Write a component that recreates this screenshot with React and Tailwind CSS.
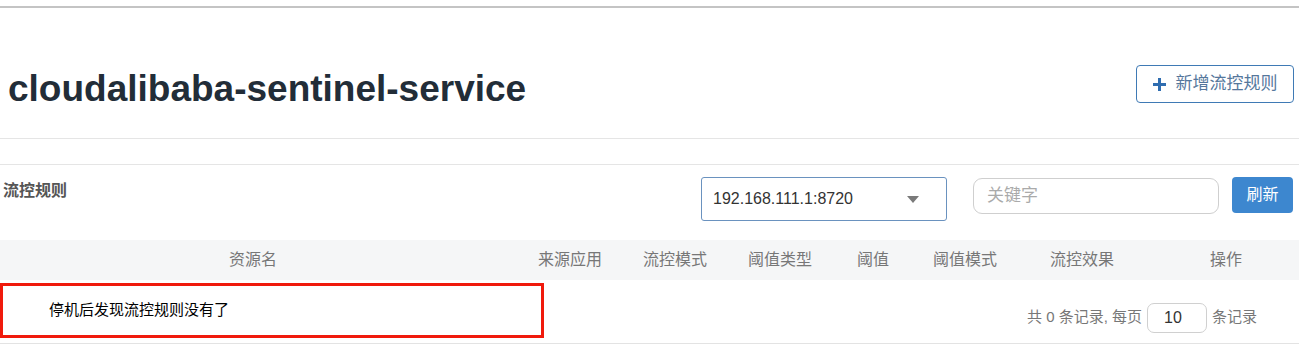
import React from 'react';

const cjk = { fontFamily: '"Liberation Sans", "Noto Sans CJK SC", sans-serif' };

const columns = [
    { label: '资源名', cls: 'w-[506px]' },
    { label: '来源应用', cls: 'w-[128px]' },
    { label: '流控模式', cls: 'w-[82px]' },
    { label: '阈值类型', cls: 'w-[128px]' },
    { label: '阈值', cls: 'w-[58px]' },
    { label: '阈值模式', cls: 'w-[126px]' },
    { label: '流控效果', cls: 'w-[108px]' },
    { label: '操作', cls: 'w-[163px] pl-[17px]' },
];

const App = () => {
    return (
        <div className='w-[1299px] h-[359px] bg-white overflow-hidden text-[#333]' style={cjk}>
            <div className='h-[6px]'></div>
            <div className='h-[2px] bg-[#c4c4c4]'></div>

            {/* page header */}
            <div className='h-[131px] flex items-start justify-between border-b border-[#e5e5e5]'>
                <h1 className='mt-[62px] pl-[8px] text-[37px] leading-none font-bold text-[#222d38]'>
                    cloudalibaba-sentinel-service
                </h1>
                <button className='mt-[57px] mr-[5px] w-[158px] h-[38px] flex items-center justify-center gap-[10px] rounded-[4px] border border-[#3f7ab5] text-[17px] text-[#55779c]'>
                    <svg width='13' height='13' viewBox='0 0 13 13'>
                        <path d='M5 0h3v5h5v3H8v5H5V8H0V5h5z' fill='#2f6db0' />
                    </svg>
                    新增流控规则
                </button>
            </div>
            <div className='h-[26px] border-b border-[#e5e5e5]'></div>

            {/* toolbar */}
            <div className='h-[75px] flex items-start'>
                <div className='w-[701px] pl-[3px] pt-[14px] text-[16px] font-bold text-[#555]'>流控规则</div>
                <div className='mt-[12px] w-[246px] h-[44px] flex items-center justify-between pl-[11px] pr-[27px] rounded-[3px] border border-[#6a92bf] text-[16px] text-[#333]'>
                    <span>192.168.111.1:8720</span>
                    <svg width='12' height='7' viewBox='0 0 12 7'>
                        <path d='M0 0h12L6 7z' fill='#7a7a7a' />
                    </svg>
                </div>
                <div className='ml-[26px] mt-[13px] w-[246px] h-[36px] flex items-center pl-[13px] rounded-[9px] border border-[#cfcfcf] text-[17px] text-[#aaa]'>关键字</div>
                <button className='ml-[13px] mt-[12px] w-[61px] h-[36px] rounded-[4px] bg-[#3d87cf] text-[16px] text-white'>刷新</button>
            </div>

            {/* table head */}
            <div className='h-[40px] flex items-center bg-[#f5f6f7] text-[16px] text-[#777]'>
                {columns.map((col, index) => (
                    <div key={index} className={`${col.cls} text-center`}>{col.label}</div>
                ))}
            </div>

            {/* table body */}
            <div className='relative h-[64px] flex items-center justify-end border-b border-[#e3e3e3] pr-[42px] text-[15px] text-[#777]'>
                <div className='absolute left-0 top-[3px] w-[544px] h-[55px] border-[3px] border-[#f01a0c] flex items-center pl-[46px] text-[15px] text-black'>
                    停机后发现流控规则没有了
                </div>
                <span className='mt-[12px]'>共 0 条记录, 每页</span>
                <div className='mt-[12px] ml-[5px] w-[60px] h-[30px] flex items-center pl-[16px] rounded-[7px] border border-[#d0d0d0] text-[16px] text-[#333]'>10</div>
                <span className='mt-[12px] ml-[5px]'>条记录</span>
            </div>
        </div>
    );
};

export default App;
